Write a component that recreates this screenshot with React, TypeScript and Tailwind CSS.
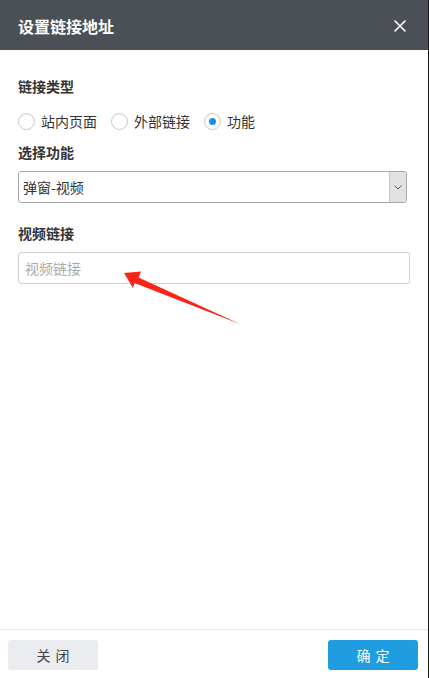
import React from "react";

const font = { fontFamily: '"Noto Sans CJK SC", "Noto Sans", sans-serif' };

function Radio({ checked, label }: { checked?: boolean; label: string }) {
  return (
    <label className="flex items-center gap-[6px]">
      <span className="w-[17px] h-[17px] rounded-full border border-[#c9c9c9] bg-white flex items-center justify-center shadow-[inset_0_1px_1px_rgba(0,0,0,0.06)]">
        {checked && <span className="w-[7px] h-[7px] rounded-full bg-[#1e8fe0]" />}
      </span>
      <span className="text-[14px] leading-[20px] text-[#333]">{label}</span>
    </label>
  );
}

export default function App() {
  return (
    <div
      className="relative w-[429px] h-[678px] flex flex-col bg-white border-r border-[#1a1a1a] overflow-hidden"
      style={font}
    >
      <div className="h-[50px] shrink-0 bg-[#4b4f56] flex items-center justify-between pl-[18px] pr-[22px]">
        <span className="text-white text-[16px] font-bold leading-[22px] pt-[2px]">设置链接地址</span>
        <svg width="12" height="12" viewBox="0 0 12 12" className="mt-[1px]">
          <path d="M1 1 L11 11 M11 1 L1 11" stroke="#fff" strokeWidth="1.6" strokeLinecap="round" />
        </svg>
      </div>

      <div className="flex-1 px-[18px] pt-[26px]">
        <div className="text-[14px] leading-[20px] font-bold text-[#333]">链接类型</div>
        <div className="mt-[15px] flex items-center gap-[14px]">
          <Radio label="站内页面" />
          <Radio label="外部链接" />
          <Radio checked label="功能" />
        </div>
        <div className="mt-[11px] text-[14px] leading-[20px] font-bold text-[#333]">选择功能</div>
        <div className="mt-[9px] w-[389px] h-[32px] border border-[#a8a8a8] rounded-[3px] flex items-stretch overflow-hidden">
          <span className="flex-1 flex items-center pl-[4px] text-[14px] text-[#333]">弹窗-视频</span>
          <span className="w-[17px] bg-[#e1e1e1] border-l border-[#c8c8c8] flex items-center justify-center">
            <svg width="8" height="5" viewBox="0 0 8 5">
              <path d="M0.5 0.5 L4 4 L7.5 0.5" stroke="#555" strokeWidth="1" fill="none" />
            </svg>
          </span>
        </div>
        <div className="mt-[20px] text-[14px] leading-[20px] font-bold text-[#333]">视频链接</div>
        <div className="mt-[9px] w-[392px] h-[32px] border border-[#cfcfcf] rounded-[3px] flex items-center pl-[6px] text-[14px] text-[#aaa]">
          视频链接
        </div>
      </div>

      <div className="shrink-0 border-t border-[#e6e6e6] pt-[10px] pb-[8px] pl-[8px] pr-[10px] flex justify-between">
        <button className="w-[90px] h-[30px] rounded-[3px] bg-[#ebecf0] text-[14px] text-[#444] tracking-[5px] pl-[5px]">
          关闭
        </button>
        <button className="w-[90px] h-[30px] rounded-[3px] bg-[#1f9de0] text-[14px] text-white tracking-[5px] pl-[5px]">
          确定
        </button>
      </div>

      <svg className="absolute left-0 top-0 pointer-events-none" width="429" height="678" viewBox="0 0 429 678">
        <polygon
          points="124,273 141,271.5 138.5,277.5 241,324.5 134.5,283 133,288"
          fill="#fb2317"
        />
      </svg>
    </div>
  );
}
